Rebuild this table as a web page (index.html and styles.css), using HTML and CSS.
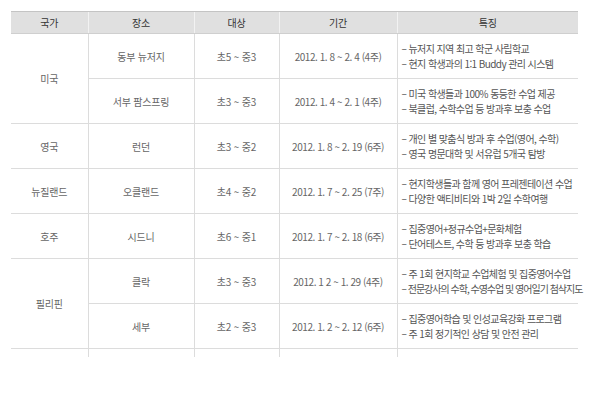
FILE: index.html
```html
<!DOCTYPE html>
<html lang="ko">
<head>
<meta charset="utf-8">
<link rel="stylesheet" href="styles.css">
</head>
<body>
<div class="wrap">
<table class="prog">
  <colgroup>
    <col class="c1"><col class="c2"><col class="c3"><col class="c4"><col class="c5">
  </colgroup>
  <thead>
    <tr><th>국가</th><th>장소</th><th>대상</th><th>기간</th><th>특징</th></tr>
  </thead>
  <tbody>
    <tr>
      <td rowspan="2">미국</td><td>동부 뉴저지</td><td>초5 ~ 중3</td><td class="date">2012. 1. 8 ~ 2. 4 (4주)</td>
      <td class="desc">– 뉴저지 지역 최고 학군 사립학교<br>– 현지 학생과의 1:1 Buddy 관리 시스템</td>
    </tr>
    <tr>
      <td>서부 팜스프링</td><td>초3 ~ 중3</td><td class="date">2012. 1. 4 ~ 2. 1 (4주)</td>
      <td class="desc">– 미국 학생들과 100% 동등한 수업 제공<br>– 북클럽, 수학수업 등 방과후 보충 수업</td>
    </tr>
    <tr>
      <td>영국</td><td>런던</td><td>초3 ~ 중2</td><td class="date">2012. 1. 8 ~ 2. 19 (6주)</td>
      <td class="desc">– 개인 별 맞춤식 방과 후 수업(영어, 수학)<br>– 영국 명문대학 및 서유럽 5개국 탐방</td>
    </tr>
    <tr>
      <td>뉴질랜드</td><td>오클랜드</td><td>초4 ~ 중2</td><td class="date">2012. 1. 7 ~ 2. 25 (7주)</td>
      <td class="desc">– 현지학생들과 함께 영어 프레젠테이션 수업<br>– 다양한 액티비티와 1박 2일 수학여행</td>
    </tr>
    <tr>
      <td>호주</td><td>시드니</td><td>초6 ~ 중1</td><td class="date">2012. 1. 7 ~ 2. 18 (6주)</td>
      <td class="desc">– 집중영어+정규수업+문화체험<br>– 단어테스트, 수학 등 방과후 보충 학습</td>
    </tr>
    <tr>
      <td rowspan="2">필리핀</td><td>클락</td><td>초3 ~ 중3</td><td class="date">2012. 1 2 ~ 1. 29 (4주)</td>
      <td class="desc">– 주 1회 현지학교 수업체험 및 집중영어수업<br><span class="tight">– 전문강사의 수학, 수영수업 및 영어일기 첨삭지도</span></td>
    </tr>
    <tr>
      <td>세부</td><td>초2 ~ 중3</td><td class="date">2012. 1. 2 ~ 2. 12 (6주)</td>
      <td class="desc">– 집중영어학습 및 인성교육강화 프로그램<br>– 주 1회 정기적인 상담 및 안전 관리</td>
    </tr>
    <tr class="stub"><td></td><td></td><td></td><td></td><td></td></tr>
  </tbody>
</table>
</div>
</body>
</html>
```

FILE: styles.css
```css
html, body {
  margin: 0;
  padding: 0;
  background: #fff;
}
.wrap {
  padding: 11px 12px 0 11px;
}
.prog {
  width: 567px;
  border-collapse: collapse;
  table-layout: fixed;
  font-family: "Noto Sans CJK KR", "Liberation Sans", sans-serif;
  font-size: 10px;
  letter-spacing: -0.2px;
  color: #666;
}
.c1 { width: 77px; }
.c2 { width: 106px; }
.c3 { width: 85px; }
.c4 { width: 118px; }
.c5 { width: 181px; }
.prog th {
  height: 21px;
  padding: 0;
  background: #e0e0e0;
  border-top: 1px solid #c4c4c4;
  border-bottom: 1px solid #cfcfcf;
  font-weight: normal;
  color: #333;
  text-align: center;
}
.prog th + th {
  border-left: 1px solid #f2f2f2;
}
.prog td {
  height: 44px;
  padding: 0;
  text-align: center;
  vertical-align: middle;
  border-bottom: 1px solid #dcdcdc;
  border-left: 1px solid #dcdcdc;
  line-height: 15px;
}
.prog td:first-child {
  border-left: none;
}
.prog tr:first-child td:first-child,
.prog tr:nth-child(6) td:first-child {
  border-right: 1px solid #dcdcdc;
}
.prog td.date {
  letter-spacing: -0.45px;
}
.prog td.desc {
  text-align: left;
  padding-left: 4px;
  white-space: nowrap;
  letter-spacing: -0.6px;
  color: #555;
}
.prog td.desc .tight {
  letter-spacing: -1px;
}
.prog tr.stub td {
  height: 8px;
  border-bottom: none;
}
.prog tr.stub td:first-child {
  border-right: 1px solid #dcdcdc;
}
.prog tr.stub td:last-child {
  border-left: 1px solid #dcdcdc;
}
```
